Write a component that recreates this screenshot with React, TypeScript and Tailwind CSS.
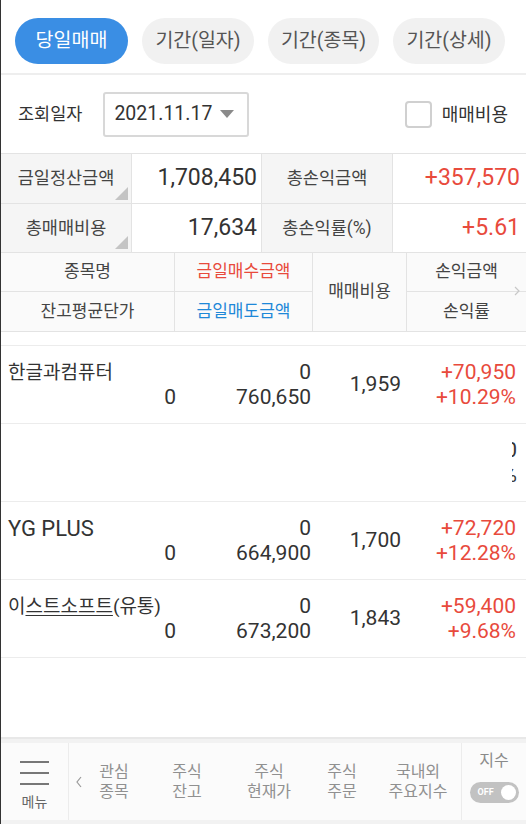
import React from "react";

const FONT = { fontFamily: "Roboto, 'Noto Sans CJK KR', sans-serif" };

const tabs = [
  { label: "당일매매", w: "w-[113px]", active: true },
  { label: "기간(일자)", w: "w-[112px]", active: false },
  { label: "기간(종목)", w: "w-[111px]", active: false },
  { label: "기간(상세)", w: "w-[112px]", active: false },
];

interface Row {
  name: string;
  avg: string;
  buy: string;
  sell: string;
  fee: string;
  pl: string;
  rate: string;
  latin?: boolean;
  underline?: boolean;
}

const rows: Row[] = [
  { name: "한글과컴퓨터", avg: "0", buy: "0", sell: "760,650", fee: "1,959", pl: "+70,950", rate: "+10.29%" },
  { name: "YG PLUS", avg: "0", buy: "0", sell: "664,900", fee: "1,700", pl: "+72,720", rate: "+12.28%", latin: true },
  { name: "이스트소프트(유통)", avg: "0", buy: "0", sell: "673,200", fee: "1,843", pl: "+59,400", rate: "+9.68%", underline: true },
];

const Corner = () => (
  <svg className="absolute right-[3px] bottom-[3px]" width="13" height="13" viewBox="0 0 13 13">
    <path d="M13 0 L13 13 L0 13 Z" fill="#c4c4c4" />
  </svg>
);

const StockRow: React.FC<{ row: Row }> = ({ row }) => (
  <div className="h-[78px] border-b border-[#ececec] flex items-center text-[#333]">
    <div className="w-[175px] h-full flex flex-col justify-center pl-[7px]">
      <div className={`${row.latin ? "text-[22px]" : "text-[19px]"} leading-[25px] whitespace-nowrap`}>
        {row.underline ? (
          <>
            이<span className="underline underline-offset-2">스트소프트</span>(유통)
          </>
        ) : (
          row.name
        )}
      </div>
      <div className="text-[21px] leading-[25px] text-right">{row.avg}</div>
    </div>
    <div className="w-[135px] flex flex-col items-end text-[21px] leading-[25px]">
      <div>{row.buy}</div>
      <div>{row.sell}</div>
    </div>
    <div className="w-[90px] text-right text-[21px]">{row.fee}</div>
    <div className="flex-1 flex flex-col items-end pr-[10px] text-[21px] leading-[25px] text-[#e84a3c]">
      <div>{row.pl}</div>
      <div>{row.rate}</div>
    </div>
  </div>
);

const NavItem: React.FC<{ top: string; bottom: string; w: string }> = ({ top, bottom, w }) => (
  <div className={`${w} flex flex-col items-center justify-center text-[16px] leading-[20px] text-[#909090]`}>
    <span>{top}</span>
    <span>{bottom}</span>
  </div>
);

export default function App() {
  return (
    <div
      className="w-[526px] h-[824px] bg-white border-l border-[#333] flex flex-col overflow-hidden relative"
      style={FONT}
    >
      {/* tabs */}
      <div className="h-[75px] flex items-start pt-[18px] pl-[14px] gap-[14px] border-b-2 border-[#eeeeee] shrink-0">
        {tabs.map((t) => (
          <div
            key={t.label}
            className={`${t.w} h-[46px] rounded-full flex items-center justify-center text-[19.5px] ${
              t.active ? "bg-[#3a8ee4] text-white" : "bg-[#f1f1f1] text-[#555]"
            }`}
          >
            {t.label}
          </div>
        ))}
      </div>

      {/* date row */}
      <div className="h-[78px] flex items-center pl-[17px] pr-[18px] shrink-0">
        <span className="text-[17.5px] text-[#333]">조회일자</span>
        <div className="ml-[21px] w-[146px] h-[45px] border-2 border-[#d8d8d8] rounded-[3px] flex items-center pl-[9px] gap-[8px]">
          <span className="text-[19.5px] text-[#333]">2021.11.17</span>
          <svg width="14" height="8" viewBox="0 0 14 8">
            <path d="M0 0 L14 0 L7 8 Z" fill="#8a8a8a" />
          </svg>
        </div>
        <div className="ml-auto flex items-center gap-[10px]">
          <div className="w-[27px] h-[27px] border-2 border-[#d0d0d0] rounded-[4px]" />
          <span className="text-[18px] text-[#333]">매매비용</span>
        </div>
      </div>

      {/* summary */}
      <div className="border-t border-[#e3e3e3] shrink-0">
        <div className="grid grid-cols-[131px_130px_131px_1fr] h-[50px] border-b border-[#e3e3e3]">
          <div className="relative bg-[#f5f5f5] flex items-center justify-center text-[17.5px] text-[#444] border-r border-[#e3e3e3]">
            금일정산금액
            <Corner />
          </div>
          <div className="flex items-center justify-end pr-[4px] text-[23px] text-[#333] border-r border-[#e3e3e3]">
            1,708,450
          </div>
          <div className="bg-[#f5f5f5] flex items-center justify-center text-[17.5px] text-[#444] border-r border-[#e3e3e3]">
            총손익금액
          </div>
          <div className="flex items-center justify-end pr-[6px] text-[23px] text-[#e84a3c]">+357,570</div>
        </div>
        <div className="grid grid-cols-[131px_130px_131px_1fr] h-[49px] border-b border-[#e3e3e3]">
          <div className="relative bg-[#f5f5f5] flex items-center justify-center text-[17.5px] text-[#444] border-r border-[#e3e3e3]">
            총매매비용
            <Corner />
          </div>
          <div className="flex items-center justify-end pr-[4px] text-[23px] text-[#333] border-r border-[#e3e3e3]">
            17,634
          </div>
          <div className="bg-[#f5f5f5] flex items-center justify-center text-[17.5px] text-[#444] border-r border-[#e3e3e3]">
            총손익률(%)
          </div>
          <div className="flex items-center justify-end pr-[6px] text-[23px] text-[#e84a3c]">+5.61</div>
        </div>
      </div>

      {/* list header */}
      <div className="relative grid grid-cols-[174px_138px_94px_1fr] grid-rows-[39px_39px] bg-[#fafafa] border-b border-[#e3e3e3] text-[17px] text-[#444] shrink-0">
        <div className="flex items-center justify-center border-r border-b border-[#e3e3e3]">종목명</div>
        <div className="flex items-center justify-center border-r border-b border-[#e3e3e3] text-[#e84a3c]">금일매수금액</div>
        <div className="row-span-2 flex items-center justify-center border-r border-[#e3e3e3]">매매비용</div>
        <div className="flex items-center justify-center border-b border-[#e3e3e3]">손익금액</div>
        <div className="flex items-center justify-center border-r border-[#e3e3e3]">잔고평균단가</div>
        <div className="flex items-center justify-center border-r border-[#e3e3e3] text-[#1e88d8]">금일매도금액</div>
        <div className="flex items-center justify-center">손익률</div>
        <svg className="absolute right-[6px] top-[33px]" width="6" height="10" viewBox="0 0 6 10">
          <path d="M1 1 L5 5 L1 9" stroke="#c8c8c8" strokeWidth="1.2" fill="none" />
        </svg>
      </div>

      {/* list */}
      <div className="mt-[13px] border-t border-[#ececec] shrink-0">
        <StockRow row={rows[0]} />
        <div className="h-[78px] border-b border-[#ececec] flex justify-end pr-[9px]">
          <div className="w-[5px] overflow-hidden flex flex-col items-end justify-center text-[21px] leading-[25px] text-[#333]">
            <div className="flex justify-end whitespace-nowrap">+68,420</div>
            <div className="flex justify-end whitespace-nowrap">+9.76%</div>
          </div>
        </div>
        <StockRow row={rows[1]} />
        <StockRow row={rows[2]} />
      </div>

      <div className="flex-1" />

      {/* bottom nav */}
      <div className="h-[87px] border-t-2 border-[#e8e8e8] bg-[#f2f2f2] pt-[4px] shrink-0">
        <div className="h-[77px] bg-[#fbfbfb] flex">
          <div className="w-[68px] border-r border-[#ececec] flex flex-col items-center pt-[18px]">
            <div className="w-[29px] flex flex-col gap-[9px]">
              <div className="h-[2px] bg-[#777]" />
              <div className="h-[2px] bg-[#777]" />
              <div className="h-[2px] bg-[#777]" />
            </div>
            <span className="mt-[7px] text-[14px] text-[#666]">메뉴</span>
          </div>
          <div className="flex items-center pl-[6px] text-[#999]">
            <svg width="8" height="12" viewBox="0 0 8 12">
              <path d="M6 1 L2 6 L6 11" stroke="#999" strokeWidth="1.2" fill="none" />
            </svg>
          </div>
          <NavItem top="관심" bottom="종목" w="w-[62px]" />
          <NavItem top="주식" bottom="잔고" w="w-[84px]" />
          <NavItem top="주식" bottom="현재가" w="w-[80px]" />
          <NavItem top="주식" bottom="주문" w="w-[66px]" />
          <NavItem top="국내외" bottom="주요지수" w="w-[86px]" />
          <div className="flex-1 border-l border-[#ececec] flex flex-col items-center pt-[6px]">
            <span className="text-[16px] text-[#8a8a8a]">지수</span>
            <div className="mt-[9px] w-[49px] h-[21px] rounded-full bg-[#c2c2c2] flex items-center justify-between pl-[8px] pr-[3px]">
              <span className="text-[9px] font-bold text-white">OFF</span>
              <div className="w-[15px] h-[15px] rounded-full bg-white" />
            </div>
          </div>
        </div>
      </div>
    </div>
  );
}
